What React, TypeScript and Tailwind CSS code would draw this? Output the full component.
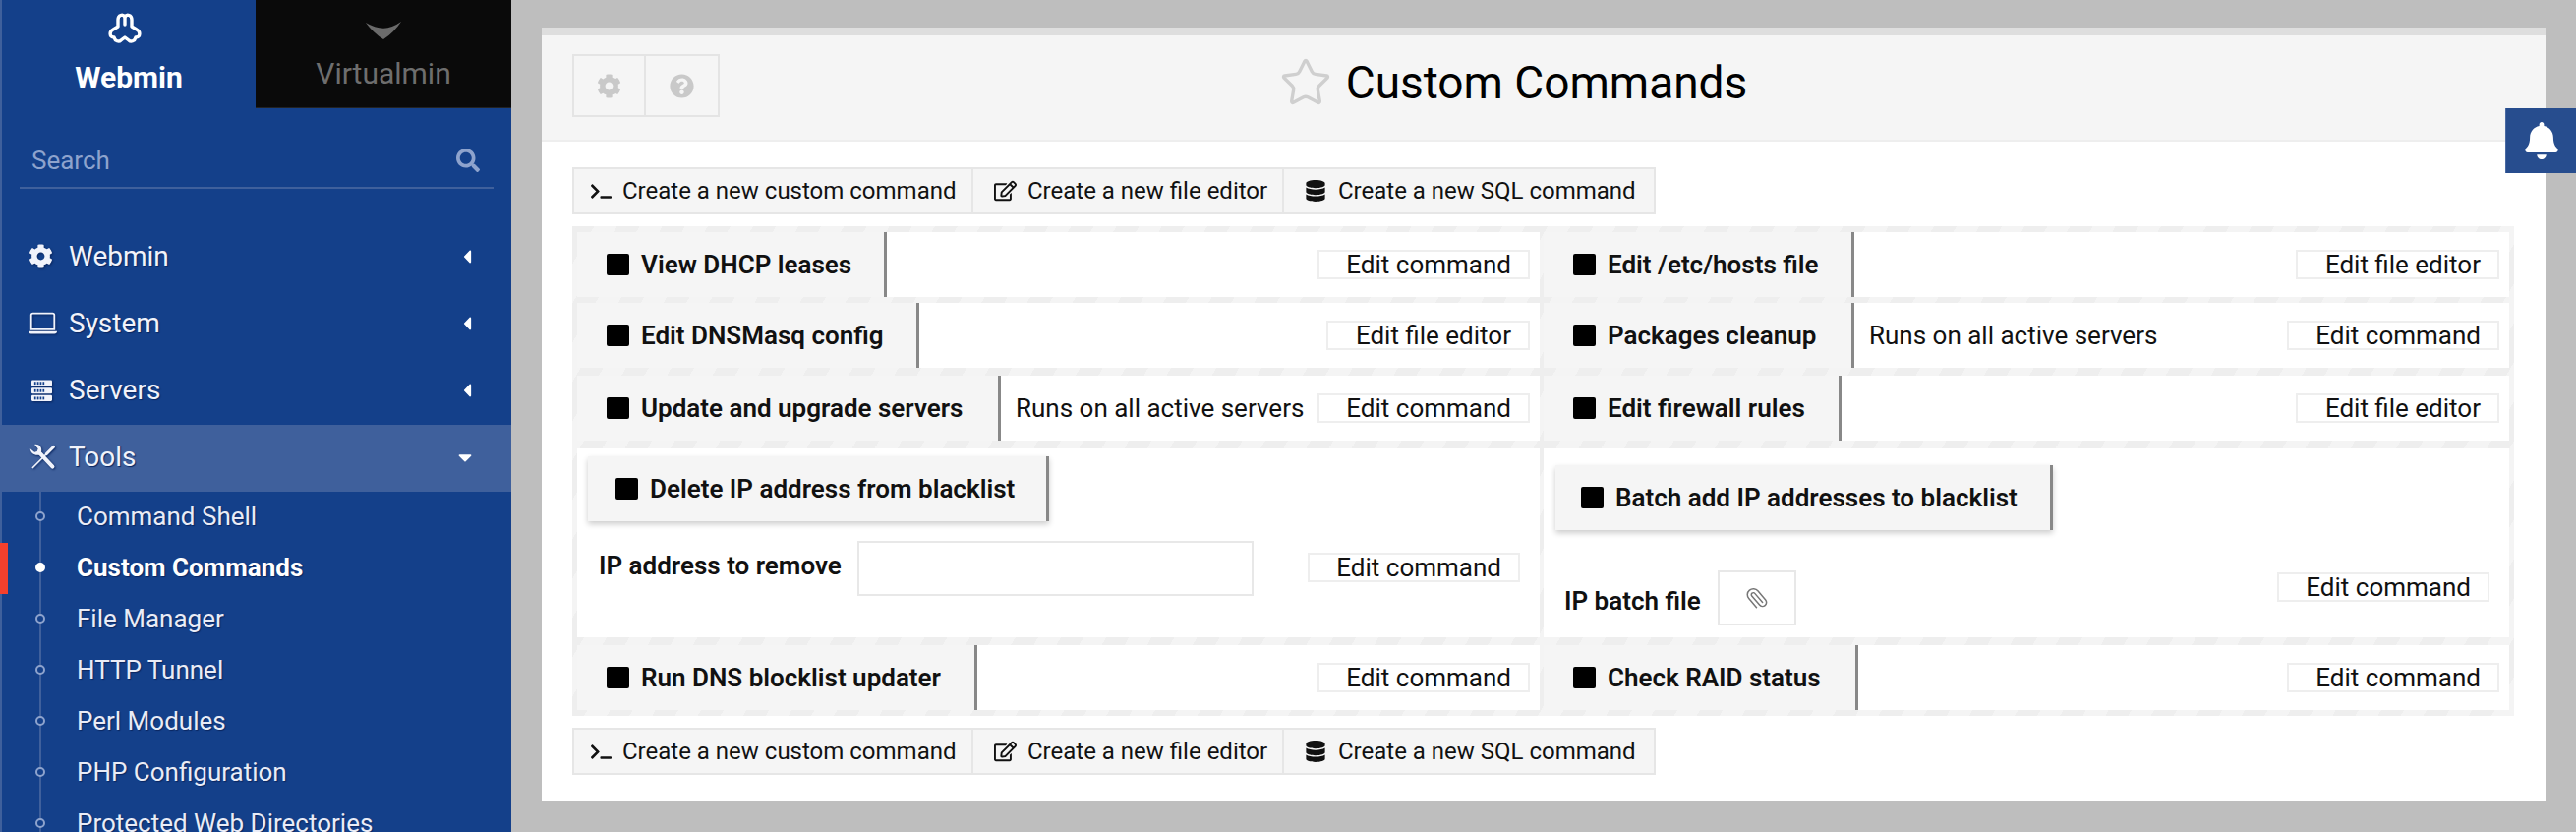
import { FaBell, FaCaretDown, FaCaretLeft, FaCog, FaDatabase, FaQuestionCircle, FaRegEdit, FaSearch, FaTerminal } from "react-icons/fa";
import { BsLaptop } from "react-icons/bs";
import { Paperclip, Star } from "lucide-react";

const SUBMENU = ["Command Shell", "Custom Commands", "File Manager", "HTTP Tunnel", "Perl Modules", "PHP Configuration", "Protected Web Directories"];

function WebminLogo() {
  return (
    <svg viewBox="0 0 36 34" className="w-[36px] h-[34px]" fill="none" stroke="white" strokeWidth="3.4" strokeLinejoin="round" strokeLinecap="round">
      <path d="M11 15 V8 C11 3 16 2 18 5 C20 2 25 3 25 8 V15 L30 18 C34 20 34 26 29 26 C28 30 24 31 22 29 L18 26 L14 29 C12 31 8 30 7 26 C2 26 2 20 6 18 Z" />
      <path d="M18 5 V13" />
    </svg>
  );
}

function VirtualminLogo() {
  return (
    <svg viewBox="0 0 38 20" className="w-[38px] h-[19px]" fill="#6b6b6b">
      <path d="M0 1 Q10 7 19 7 Q28 7 38 0 Q30 12 19 19 Q8 12 0 1 Z" />
    </svg>
  );
}

function ToolsIcon() {
  return (
    <svg viewBox="0 0 32 32" className="w-[28px] h-[28px]" fill="#f1f3fb" stroke="none">
      <path d="M2 6 L7 10 L10 9 L11 6 L7 1 C12 0 16 4 15 9 L13 13 C8 15 2 11 2 6 Z" />
      <path d="M13 11 L28 27" stroke="#f1f3fb" strokeWidth="4.5" strokeLinecap="round" />
      <path d="M29 4 L21 12" stroke="#f1f3fb" strokeWidth="3.6" strokeLinecap="round" />
      <path d="M21 12 L5 28" stroke="#f1f3fb" strokeWidth="2" strokeLinecap="round" />
    </svg>
  );
}

function ServerIcon() {
  return (
    <svg viewBox="0 0 22 24" className="w-[21px] h-[24px] ml-[3px]">
      {[1, 9, 17].map((y) => (
        <g key={y}>
          <rect x="0" y={y} width="22" height="6.5" rx="1.2" fill="#f1f3fb" />
          {[3, 6, 9, 12].map((x) => (
            <rect key={x} x={x} y={y + 1.8} width="1.8" height="3" fill="#14408a" />
          ))}
        </g>
      ))}
    </svg>
  );
}

function MenuRow({ icon, label, open }: { icon: React.ReactNode; label: string; open?: boolean }) {
  return (
    <div className={`h-[68px] flex items-center pl-[27px] pr-[36px] pb-[3px] ${open ? "bg-[#3f609c]" : ""}`}>
      <span className="w-[41px] flex items-center text-[#f1f3fb] [filter:drop-shadow(1px_1px_1px_#0a2660)]">{icon}</span>
      <span className="text-[28px] text-[#f1f3fb] [text-shadow:1px_1px_1px_#0a2660]">{label}</span>
      <span className="ml-auto text-white">
        {open ? <FaCaretDown className="w-[22px] h-[22px]" /> : <FaCaretLeft className="w-[18px] h-[22px]" />}
      </span>
    </div>
  );
}

function Sidebar() {
  return (
    <aside className="w-[520px] shrink-0 h-full bg-[#14408a] border-l-2 border-[#3f609c] relative font-['Roboto',sans-serif]">
      <div className="flex h-[110px]">
        <div className="w-[258px] flex flex-col items-center pt-[12px]">
          <span className="mr-[8px]"><WebminLogo /></span>
          <span className="text-[30px] leading-[32px] font-bold text-white mt-[17px]">Webmin</span>
        </div>
        <div className="w-[260px] bg-[#0a0a0a] flex flex-col items-center pt-[22px] border-b border-[#222]">
          <VirtualminLogo />
          <span className="text-[30px] leading-[32px] text-[#6e6e6e] mt-[18px]">Virtualmin</span>
        </div>
      </div>
      <div className="mx-[18px] mt-[30px] h-[52px] border-b-2 border-[#3f609c] flex items-center pl-[12px] pr-[14px] pb-[4px]">
        <span className="text-[26px] text-[#8ea3cd]">Search</span>
        <FaSearch className="ml-auto w-[24px] h-[24px] text-[#8ea3cd]" />
      </div>
      <div className="mt-[36px]">
        <MenuRow icon={<FaCog className="w-[25px] h-[25px]" />} label="Webmin" />
        <MenuRow icon={<BsLaptop className="w-[29px] h-[29px]" />} label="System" />
        <MenuRow icon={<ServerIcon />} label="Servers" />
        <MenuRow icon={<ToolsIcon />} label="Tools" open />
      </div>
      <div className="relative ml-[38px] border-l-2 border-[#3f609c]">
        {SUBMENU.map((item) => {
          const active = item === "Custom Commands";
          return (
            <div key={item} className="h-[52px] flex items-center relative pl-[36px] pb-[2px]">
              <span className={`absolute left-[-6px] top-[20px] w-[10px] h-[10px] rounded-full border-2 ${active ? "bg-white border-white" : "bg-[#14408a] border-[#8ea3cd]"}`} />
              <span className={`text-[26px] whitespace-nowrap [text-shadow:1px_1px_1px_#0a2660] ${active ? "font-bold text-white" : "text-[#e9ecf7]"}`}>{item}</span>
            </div>
          );
        })}
      </div>
      <div className="absolute left-[-2px] top-[552px] w-[8px] h-[52px] bg-[#f4402c]" />
    </aside>
  );
}

function Toolbar() {
  return (
    <div className="flex h-[48px] w-[1102px] border-2 border-[#e6e6e6] bg-[#f5f5f5] text-[24px] text-[#111]">
      <div className="w-[406px] flex items-center pl-[17px] border-r-2 border-[#e6e6e6] whitespace-nowrap">
        <FaTerminal className="w-[21px] h-[17px] mr-[11px]" />Create a new custom command
      </div>
      <div className="w-[316px] flex items-center pl-[21px] border-r-2 border-[#e6e6e6] whitespace-nowrap">
        <FaRegEdit className="w-[23px] h-[22px] mr-[11px]" />Create a new file editor
      </div>
      <div className="flex-1 flex items-center pl-[22px] whitespace-nowrap">
        <FaDatabase className="w-[20px] h-[22px] mr-[13px]" />Create a new SQL command
      </div>
    </div>
  );
}

function CommandButton({ label, width, inset = 30, floating }: { label: string; width: number; inset?: number; floating?: boolean }) {
  return (
    <div
      className={`h-[66px] shrink-0 bg-[#f5f5f5] border-r-[3px] border-[#888] flex items-center ${floating ? "shadow-[0_3px_6px_rgba(0,0,0,0.2)]" : ""}`}
      style={{ width, paddingLeft: inset }}
    >
      <span className="w-[23px] h-[22px] bg-black rounded-[2px] mr-[12px] shrink-0" />
      <span className="text-[26px] font-semibold text-[#111] whitespace-nowrap">{label}</span>
    </div>
  );
}

function EditButton({ label, width }: { label: string; width: number }) {
  return (
    <div className="h-[30px] shrink-0 border-2 border-[#eee] bg-white flex items-center justify-end pr-[17px] text-[26px] text-[#111] whitespace-nowrap" style={{ width }}>
      {label}
    </div>
  );
}

function Row({ label, width, note, edit, editWidth, first }: { label: string; width: number; note?: string; edit: string; editWidth: number; first?: boolean }) {
  return (
    <div className={`h-[66px] bg-white flex items-center ${first ? "mb-[-2px]" : ""}`}>
      <CommandButton label={label} width={width} />
      {note && <span className="ml-[15px] text-[26px] text-[#111] whitespace-nowrap">{note}</span>}
      <div className="ml-auto mr-[10px]">
        <EditButton label={edit} width={editWidth} />
      </div>
    </div>
  );
}

function CommandTable() {
  return (
    <div className="mt-[12px] w-[1975px] bg-[repeating-linear-gradient(-60deg,#f4f4f4_0,#f4f4f4_20px,#eeeeee_20px,#eeeeee_40px)] px-[5px] pt-[6px] pb-[6px] grid grid-cols-[979px_982px] gap-x-[4px]">
      <div className="flex flex-col gap-y-[8px]">
        <Row first label="View DHCP leases" width={315} edit="Edit command" editWidth={216} />
        <Row label="Edit DNSMasq config" width={348} edit="Edit file editor" editWidth={207} />
        <Row label="Update and upgrade servers" width={431} note="Runs on all active servers" edit="Edit command" editWidth={216} />
        <div className="h-[192px] bg-white relative pl-[11px] pt-[8px]">
          <CommandButton label="Delete IP address from blacklist" width={469} inset={28} floating />
          <div className="mt-[20px] flex items-start">
            <span className="ml-[11px] mt-[6px] w-[263px] text-[26px] font-semibold text-[#111] whitespace-nowrap">IP address to remove</span>
            <div className="w-[403px] h-[56px] border-2 border-[#e8e8e8] bg-white" />
            <div className="ml-[55px] mt-[12px]">
              <EditButton label="Edit command" width={216} />
            </div>
          </div>
        </div>
        <Row label="Run DNS blocklist updater" width={407} edit="Edit command" editWidth={216} />
      </div>
      <div className="flex flex-col gap-y-[8px]">
        <Row first label="Edit /etc/hosts file" width={316} edit="Edit file editor" editWidth={207} />
        <Row label="Packages cleanup" width={316} note="Runs on all active servers" edit="Edit command" editWidth={216} />
        <Row label="Edit firewall rules" width={303} edit="Edit file editor" editWidth={207} />
        <div className="h-[192px] bg-white relative pl-[12px] pt-[17px]">
          <CommandButton label="Batch add IP addresses to blacklist" width={506} inset={26} floating />
          <div className="mt-[41px] flex items-center">
            <span className="ml-[9px] mt-[6px] w-[156px] text-[26px] font-semibold text-[#111] whitespace-nowrap">IP batch file</span>
            <div className="w-[80px] h-[56px] border-2 border-[#e8e8e8] bg-white flex items-center justify-center">
              <Paperclip className="w-[24px] h-[24px] text-[#777] rotate-[95deg]" strokeWidth={1.5} />
            </div>
            <div className="ml-[489px] mt-[-22px]">
              <EditButton label="Edit command" width={216} />
            </div>
          </div>
        </div>
        <Row label="Check RAID status" width={320} edit="Edit command" editWidth={216} />
      </div>
    </div>
  );
}

export default function App() {
  return (
    <div className="w-[2620px] h-[846px] relative flex bg-[#bebebe] overflow-hidden font-['Roboto',sans-serif]">
      <Sidebar />
      <main className="flex-1 pt-[28px] pl-[31px]">
        <div className="w-[2038px] h-[786px] bg-white border-t-[8px] border-[#dedede]">
          <div className="h-[108px] bg-[#f5f5f5] border-b-2 border-[#eee] relative flex items-center justify-center pr-[62px] pb-[10px]">
            <div className="absolute left-[31px] top-[19px] flex h-[64px] border-2 border-[#e4e4e4]">
              <div className="w-[73px] flex items-center justify-center border-r-2 border-[#e4e4e4]">
                <FaCog className="w-[25px] h-[25px] text-[#c9c9c9]" />
              </div>
              <div className="w-[73px] flex items-center justify-center">
                <FaQuestionCircle className="w-[25px] h-[25px] text-[#c9c9c9]" />
              </div>
            </div>
            <Star className="w-[54px] h-[54px] text-[#cfcfcf] mr-[14px]" strokeWidth={1.5} />
            <h1 className="text-[46px] text-black">Custom Commands</h1>
          </div>
          <div className="pl-[31px] pt-[26px]">
            <Toolbar />
            <CommandTable />
            <div className="mt-[12px]">
              <Toolbar />
            </div>
          </div>
        </div>
      </main>
      <div className="absolute right-0 top-[110px] w-[72px] h-[66px] bg-[#274d8e] border-l border-[#4a6aa3] flex items-center justify-center">
        <FaBell className="w-[36px] h-[38px] text-white" />
      </div>
    </div>
  );
}
